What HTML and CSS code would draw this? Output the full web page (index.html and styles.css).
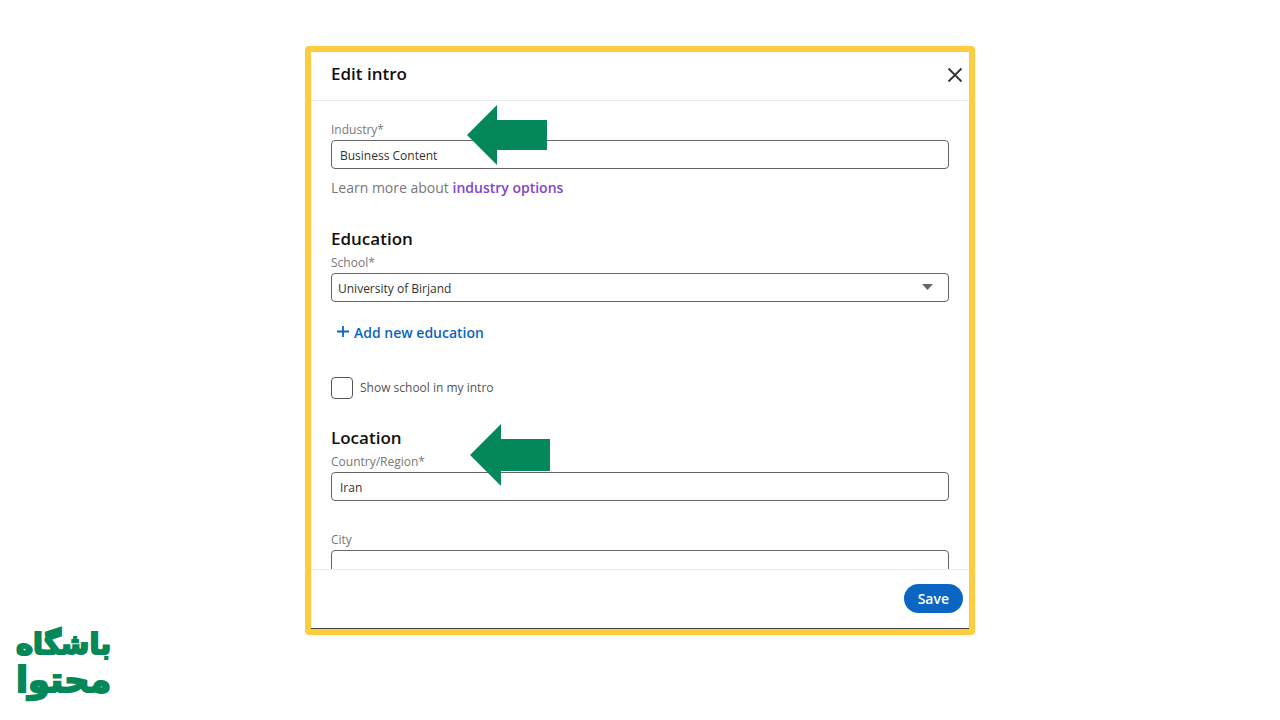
FILE: index.html
```html
<!DOCTYPE html>
<html lang="en">
<head>
  <meta charset="UTF-8" />
  <meta name="viewport" content="width=device-width, initial-scale=1.0"/>
  <title>Edit intro</title>
  <link rel="stylesheet" href="styles.css">
</head>
<body>

  <!-- Edit intro dialog -->
  <main class="page">
    <div class="modal" role="dialog" aria-labelledby="modalTitle">
      <div class="modal-header">
        <h1 id="modalTitle">Edit intro</h1>
        <button type="button" class="close-btn" aria-label="Close">
          <svg width="16" height="16" viewBox="0 0 16 16"><path d="M1.5 1.5l13 13M14.5 1.5l-13 13" stroke="#333" stroke-width="1.8" fill="none"/></svg>
        </button>
      </div>

      <form class="modal-body" id="introForm">
        <div class="field">
          <label for="industry">Industry*</label>
          <input type="text" id="industry" value="Business Content">
          <svg class="arrow arrow-industry" width="80" height="60" viewBox="0 0 80 60"><path d="M0 30L30 0v15h50v30H30v15z" fill="#058859"/></svg>
        </div>
        <p class="help">Learn more about <a href="#">industry options</a></p>

        <h2>Education</h2>
        <div class="field">
          <label for="school">School*</label>
          <select id="school">
            <option>University of Birjand</option>
          </select>
          <svg class="caret" width="11" height="6" viewBox="0 0 11 6"><path d="M0 0h11L5.5 6z" fill="#666"/></svg>
        </div>
        <button type="button" class="add-btn">
          <svg width="12" height="14" viewBox="0 0 12 14"><path d="M6 0v11M0 5.5h12" stroke="#0a66c2" stroke-width="1.8"/></svg>
          Add new education
        </button>

        <div class="check">
          <input type="checkbox" id="showSchool">
          <label for="showSchool">Show school in my intro</label>
        </div>

        <h2>Location</h2>
        <div class="field">
          <label for="country">Country/Region*</label>
          <input type="text" id="country" value="Iran">
          <svg class="arrow arrow-country" width="80" height="62" viewBox="0 0 80 62"><path d="M0 31L31 0v15h49v32H31v15z" fill="#058859"/></svg>
        </div>
        <div class="field field-city">
          <label for="city">City</label>
          <input type="text" id="city">
        </div>
      </form>

      <div class="modal-footer">
        <button type="submit" form="introForm" class="save-btn">Save</button>
      </div>
    </div>
  </main>

  <!-- Brand -->
  <div class="brand" lang="fa" dir="rtl">
    <div class="brand-top">باشگاه</div>
    <div class="brand-bottom">محتوا</div>
  </div>

</body>
</html>
```
FILE: styles.css
```css
* {
  margin: 0;
  padding: 0;
  box-sizing: border-box;
}

body {
  font-family: "Open Sans", "Noto Sans", sans-serif;
  background-color: #fff;
  color: #1a1a1a;
}

.page {
  display: flex;
  justify-content: center;
  height: 100vh;
  padding: 46px 16px 85px;
}

.modal {
  display: flex;
  flex-direction: column;
  width: 100%;
  max-width: 670px;
  border: 6px solid #ffcb3f;
  border-radius: 4px;
}

.modal-header {
  display: flex;
  justify-content: space-between;
  align-items: center;
  padding: 9px 5px 12px 20px;
  border-bottom: 1px solid #ebebeb;
}

h1, h2 {
  font-size: 17px;
  font-weight: 600;
  color: #111;
}

h1 {
  line-height: 25px;
  padding-bottom: 2px;
}

h2 {
  line-height: 25px;
  margin-top: 28px;
  padding-bottom: 2px;
}

button {
  font-family: inherit;
  border: none;
  background: none;
  cursor: pointer;
}

.close-btn {
  display: flex;
  padding: 1px;
}

.modal-body {
  flex: 1;
  min-height: 0;
  overflow: hidden;
  padding: 19px 20px 0;
}

.field {
  position: relative;
}

.field label {
  display: block;
  font-size: 12px;
  line-height: 20px;
  color: #777;
}

.field input,
.field select {
  display: block;
  width: 100%;
  height: 29px;
  padding: 2px 8px 0;
  border: 1px solid #666;
  border-radius: 4px;
  background-color: #fff;
  font-family: inherit;
  font-size: 12px;
  color: #333;
}

.field select {
  appearance: none;
  padding: 2px 6px 0;
}

.caret {
  position: absolute;
  right: 16px;
  bottom: 12px;
  pointer-events: none;
}

.arrow {
  position: absolute;
}

.arrow-industry {
  left: 136px;
  top: -15px;
}

.arrow-country {
  left: 139px;
  top: -28px;
}

.help {
  margin-top: 9px;
  font-size: 14px;
  line-height: 20px;
  color: #777;
}

.help a {
  color: #8344cc;
  font-weight: 600;
  text-decoration: none;
}

.add-btn {
  display: flex;
  align-items: center;
  gap: 5px;
  margin: 21px 0 34px 6px;
  font-size: 14px;
  font-weight: 600;
  line-height: 20px;
  color: #0a66c2;
}

.check {
  display: flex;
  align-items: center;
  gap: 7px;
  font-size: 12px;
  line-height: 20px;
  color: #555;
}

.check input {
  appearance: none;
  width: 22px;
  height: 22px;
  border: 1px solid #555;
  border-radius: 4px;
}

.check + h2 {
  margin-top: 26px;
}

.field-city {
  margin-top: 29px;
}

.modal-footer {
  display: flex;
  justify-content: flex-end;
  padding: 14px 6px 15px;
  border-top: 1px solid #ebebeb;
  border-bottom: 1px solid #444;
}

.save-btn {
  padding: 0 14px;
  border-radius: 15px;
  background-color: #0a66c2;
  color: #fff;
  font-size: 14px;
  font-weight: 600;
  line-height: 29px;
}

.brand {
  position: absolute;
  left: 16px;
  bottom: 22px;
  font-family: "DejaVu Sans", sans-serif;
  font-weight: bold;
  line-height: 36px;
  color: #058859;
  -webkit-text-stroke: 2px #058859;
}

.brand-top {
  font-size: 29px;
}

.brand-bottom {
  font-size: 35px;
}
```
